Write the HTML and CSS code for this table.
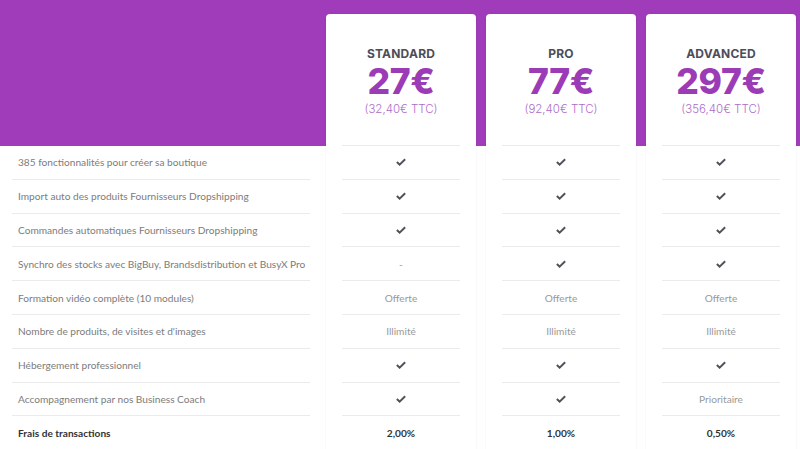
FILE: index.html
```html
<!DOCTYPE html>
<html lang="fr">
<head>
<meta charset="utf-8">
<link rel="stylesheet" href="styles.css">
</head>
<body>
<div class="band"></div>
<div class="table">
  <div class="features">
    <div class="row">385 fonctionnalités pour créer sa boutique</div>
    <div class="row">Import auto des produits Fournisseurs Dropshipping</div>
    <div class="row">Commandes automatiques Fournisseurs Dropshipping</div>
    <div class="row">Synchro des stocks avec BigBuy, Brandsdistribution et BusyX Pro</div>
    <div class="row">Formation vidéo complète (10 modules)</div>
    <div class="row">Nombre de produits, de visites et d'images</div>
    <div class="row">Hébergement professionnel</div>
    <div class="row">Accompagnement par nos Business Coach</div>
    <div class="row strong">Frais de transactions</div>
  </div>

  <div class="card">
    <div class="head">
      <div class="name">STANDARD</div>
      <div class="price">27€</div>
      <div class="ttc">(32,40€ TTC)</div>
    </div>
    <div class="cell"><svg class="chk" viewBox="0 0 12 9"><path d="M1 4.6 L4.3 7.6 L11 1.2"/></svg></div>
    <div class="cell"><svg class="chk" viewBox="0 0 12 9"><path d="M1 4.6 L4.3 7.6 L11 1.2"/></svg></div>
    <div class="cell"><svg class="chk" viewBox="0 0 12 9"><path d="M1 4.6 L4.3 7.6 L11 1.2"/></svg></div>
    <div class="cell txt">-</div>
    <div class="cell txt">Offerte</div>
    <div class="cell txt">Illimité</div>
    <div class="cell"><svg class="chk" viewBox="0 0 12 9"><path d="M1 4.6 L4.3 7.6 L11 1.2"/></svg></div>
    <div class="cell"><svg class="chk" viewBox="0 0 12 9"><path d="M1 4.6 L4.3 7.6 L11 1.2"/></svg></div>
    <div class="cell strong">2,00%</div>
  </div>

  <div class="card">
    <div class="head">
      <div class="name">PRO</div>
      <div class="price">77€</div>
      <div class="ttc">(92,40€ TTC)</div>
    </div>
    <div class="cell"><svg class="chk" viewBox="0 0 12 9"><path d="M1 4.6 L4.3 7.6 L11 1.2"/></svg></div>
    <div class="cell"><svg class="chk" viewBox="0 0 12 9"><path d="M1 4.6 L4.3 7.6 L11 1.2"/></svg></div>
    <div class="cell"><svg class="chk" viewBox="0 0 12 9"><path d="M1 4.6 L4.3 7.6 L11 1.2"/></svg></div>
    <div class="cell"><svg class="chk" viewBox="0 0 12 9"><path d="M1 4.6 L4.3 7.6 L11 1.2"/></svg></div>
    <div class="cell txt">Offerte</div>
    <div class="cell txt">Illimité</div>
    <div class="cell"><svg class="chk" viewBox="0 0 12 9"><path d="M1 4.6 L4.3 7.6 L11 1.2"/></svg></div>
    <div class="cell"><svg class="chk" viewBox="0 0 12 9"><path d="M1 4.6 L4.3 7.6 L11 1.2"/></svg></div>
    <div class="cell strong">1,00%</div>
  </div>

  <div class="card">
    <div class="head">
      <div class="name">ADVANCED</div>
      <div class="price">297€</div>
      <div class="ttc">(356,40€ TTC)</div>
    </div>
    <div class="cell"><svg class="chk" viewBox="0 0 12 9"><path d="M1 4.6 L4.3 7.6 L11 1.2"/></svg></div>
    <div class="cell"><svg class="chk" viewBox="0 0 12 9"><path d="M1 4.6 L4.3 7.6 L11 1.2"/></svg></div>
    <div class="cell"><svg class="chk" viewBox="0 0 12 9"><path d="M1 4.6 L4.3 7.6 L11 1.2"/></svg></div>
    <div class="cell"><svg class="chk" viewBox="0 0 12 9"><path d="M1 4.6 L4.3 7.6 L11 1.2"/></svg></div>
    <div class="cell txt">Offerte</div>
    <div class="cell txt">Illimité</div>
    <div class="cell"><svg class="chk" viewBox="0 0 12 9"><path d="M1 4.6 L4.3 7.6 L11 1.2"/></svg></div>
    <div class="cell txt">Prioritaire</div>
    <div class="cell strong">0,50%</div>
  </div>
</div>
</body>
</html>
```

FILE: styles.css
```css
html, body {
  margin: 0;
  padding: 0;
  background: #ffffff;
  overflow: hidden;
}
body {
  width: 800px;
  height: 449px;
  position: relative;
  font-family: "Lato", "Liberation Sans", sans-serif;
}
.band {
  position: absolute;
  left: 0;
  top: 0;
  width: 800px;
  height: 146px;
  background: #a03cba;
}
.table {
  position: relative;
  display: flex;
  padding-top: 14px;
  padding-left: 12px;
  gap: 10px;
}
.features {
  width: 298px;
  padding-top: 132px;
  margin-right: 6px;
}
.row {
  height: 32.8px;
  border-bottom: 1px solid #ebebeb;
  display: flex;
  align-items: center;
  padding-left: 6px;
  font-size: 10.15px;
  color: #7c7c7c;
  white-space: nowrap;
}
.row.strong, .cell.strong {
  color: #333333;
  font-weight: 700;
  border-bottom: none;
}
.card {
  width: 150px;
  background: #fff;
  border-radius: 4px 4px 0 0;
  box-shadow: 0 0 2px rgba(0,0,0,0.08);
  padding: 0 16px;
  box-sizing: border-box;
  height: 440px;
}
.head {
  height: 131px;
  border-bottom: 1px solid #ebebeb;
  display: flex;
  flex-direction: column;
  align-items: center;
  font-family: "Inter", "Liberation Sans", sans-serif;
}
.name {
  margin-top: 33px;
  font-size: 12px;
  font-weight: 700;
  color: #4d4d57;
  letter-spacing: 0.2px;
  line-height: 14px;
}
.price {
  margin-top: 1px;
  font-size: 35.5px;
  font-weight: 800;
  color: #9c3bb6;
  line-height: 40px;
  letter-spacing: -0.3px;
}
.ttc {
  margin-top: 0;
  font-size: 11.5px;
  font-weight: 300;
  color: #ae6cc6;
  line-height: 14px;
}
.cell {
  height: 32.8px;
  border-bottom: 1px solid #ebebeb;
  display: flex;
  align-items: center;
  justify-content: center;
  font-size: 10.15px;
  color: #999999;
}
.chk {
  width: 10px;
  height: 8px;
  fill: none;
  stroke: #505058;
  stroke-width: 2.3;
}
```
